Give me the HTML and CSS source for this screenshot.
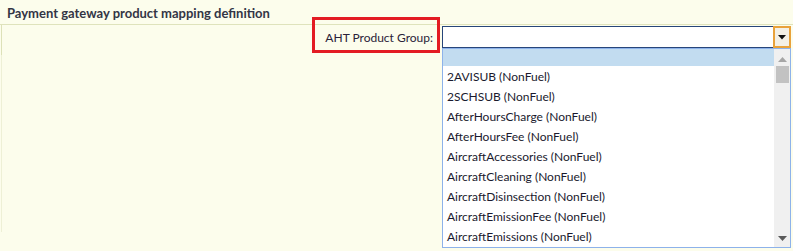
FILE: index.html
```html
<!DOCTYPE html>
<html>
<head>
<meta charset="utf-8">
<link rel="stylesheet" href="styles.css">
</head>
<body>
<div class="panel">
  <div class="title">Payment gateway product mapping definition</div>
  <div class="body">
    <div class="row">
      <label class="label">AHT Product Group:</label>
      <div class="combo">
        <div class="combo-input"></div>
        <div class="combo-btn">
          <svg width="8" height="5" viewBox="0 0 8 5"><path d="M0 0H8L4 4.5Z" fill="#111"/></svg>
        </div>
        <div class="list">
          <div class="items">
            <div class="item selected">&nbsp;</div>
            <div class="item">2AVISUB (NonFuel)</div>
            <div class="item">2SCHSUB (NonFuel)</div>
            <div class="item">AfterHoursCharge (NonFuel)</div>
            <div class="item">AfterHoursFee (NonFuel)</div>
            <div class="item">AircraftAccessories (NonFuel)</div>
            <div class="item">AircraftCleaning (NonFuel)</div>
            <div class="item">AircraftDisinsection (NonFuel)</div>
            <div class="item">AircraftEmissionFee (NonFuel)</div>
            <div class="item">AircraftEmissions (NonFuel)</div>
          </div>
          <div class="scrollbar">
            <svg class="arrow-up" width="9" height="5" viewBox="0 0 9 5"><path d="M0 5H9L4.5 0Z" fill="#a6a6a6"/></svg>
            <div class="thumb"></div>
            <div class="spacer"></div>
            <svg class="arrow-down" width="9" height="5" viewBox="0 0 9 5"><path d="M0 0H9L4.5 5Z" fill="#5a5a5a"/></svg>
          </div>
        </div>
      </div>
    </div>
  </div>
  <div class="annot"></div>
</div>
</body>
</html>
```
FILE: styles.css
```css
html, body {
  margin: 0;
  padding: 0;
  background: #fcfdec;
  width: 793px;
  height: 251px;
  overflow: hidden;
}
.panel {
  position: relative;
  font-family: "Lato", "Liberation Sans", sans-serif;
  color: #222;
}
.title {
  height: 25px;
  box-sizing: border-box;
  padding: 5px 0 0 7px;
  font-size: 13px;
  font-weight: bold;
  color: #333545;
  border-bottom: 1px solid #dfe3bc;
}
.body {
  margin-left: 1px;
  padding-left: 1px;
  height: 207px;
  padding-top: 1px;
  background:
    linear-gradient(#dde1b8, #dde1b8) left top / 1px 30px no-repeat,
    linear-gradient(#eef0d6, #eef0d6) left top / 1px 207px no-repeat;
}
.row {
  display: flex;
  justify-content: flex-end;
  align-items: flex-start;
  padding-right: 2px;
  gap: 9px;
}
.label {
  font-size: 12px;
  color: #2a2238;
  padding-top: 4px;
}
.combo {
  position: relative;
  width: 349px;
  height: 22px;
  display: flex;
}
.combo-input {
  flex: 1;
  background: #fff;
  border: 1px solid #27467a;
  border-right: none;
}
.combo-btn {
  width: 14px;
  border: 2px solid #e9a23b;
  background: #f4f0e6;
  display: flex;
  align-items: center;
  justify-content: center;
}
.list {
  position: absolute;
  top: 22px;
  left: 0;
  width: 349px;
  height: 200px;
  box-sizing: border-box;
  border: 1px solid #8db2ea;
  background: #fff;
  display: flex;
}
.items {
  flex: 1;
  font-size: 12px;
  color: #1a1a2e;
}
.item {
  height: 20px;
  box-sizing: border-box;
  padding-top: 2px;
  line-height: 18px;
  padding-left: 4px;
}
.item.selected {
  height: 17px;
  background: #c2dcf0;
}
.scrollbar {
  width: 16px;
  background: #f0f0f0;
  display: flex;
  flex-direction: column;
  align-items: center;
}
.arrow-up { margin-top: 8px; }
.thumb {
  margin-top: 4px;
  width: 13px;
  height: 17px;
  background: #c2c2c2;
}
.spacer { flex: 1; }
.arrow-down { margin-bottom: 6px; }
.annot {
  position: absolute;
  left: 312px;
  top: 17px;
  width: 128px;
  height: 36px;
  box-sizing: border-box;
  border: 3px solid #e31b23;
}
```
